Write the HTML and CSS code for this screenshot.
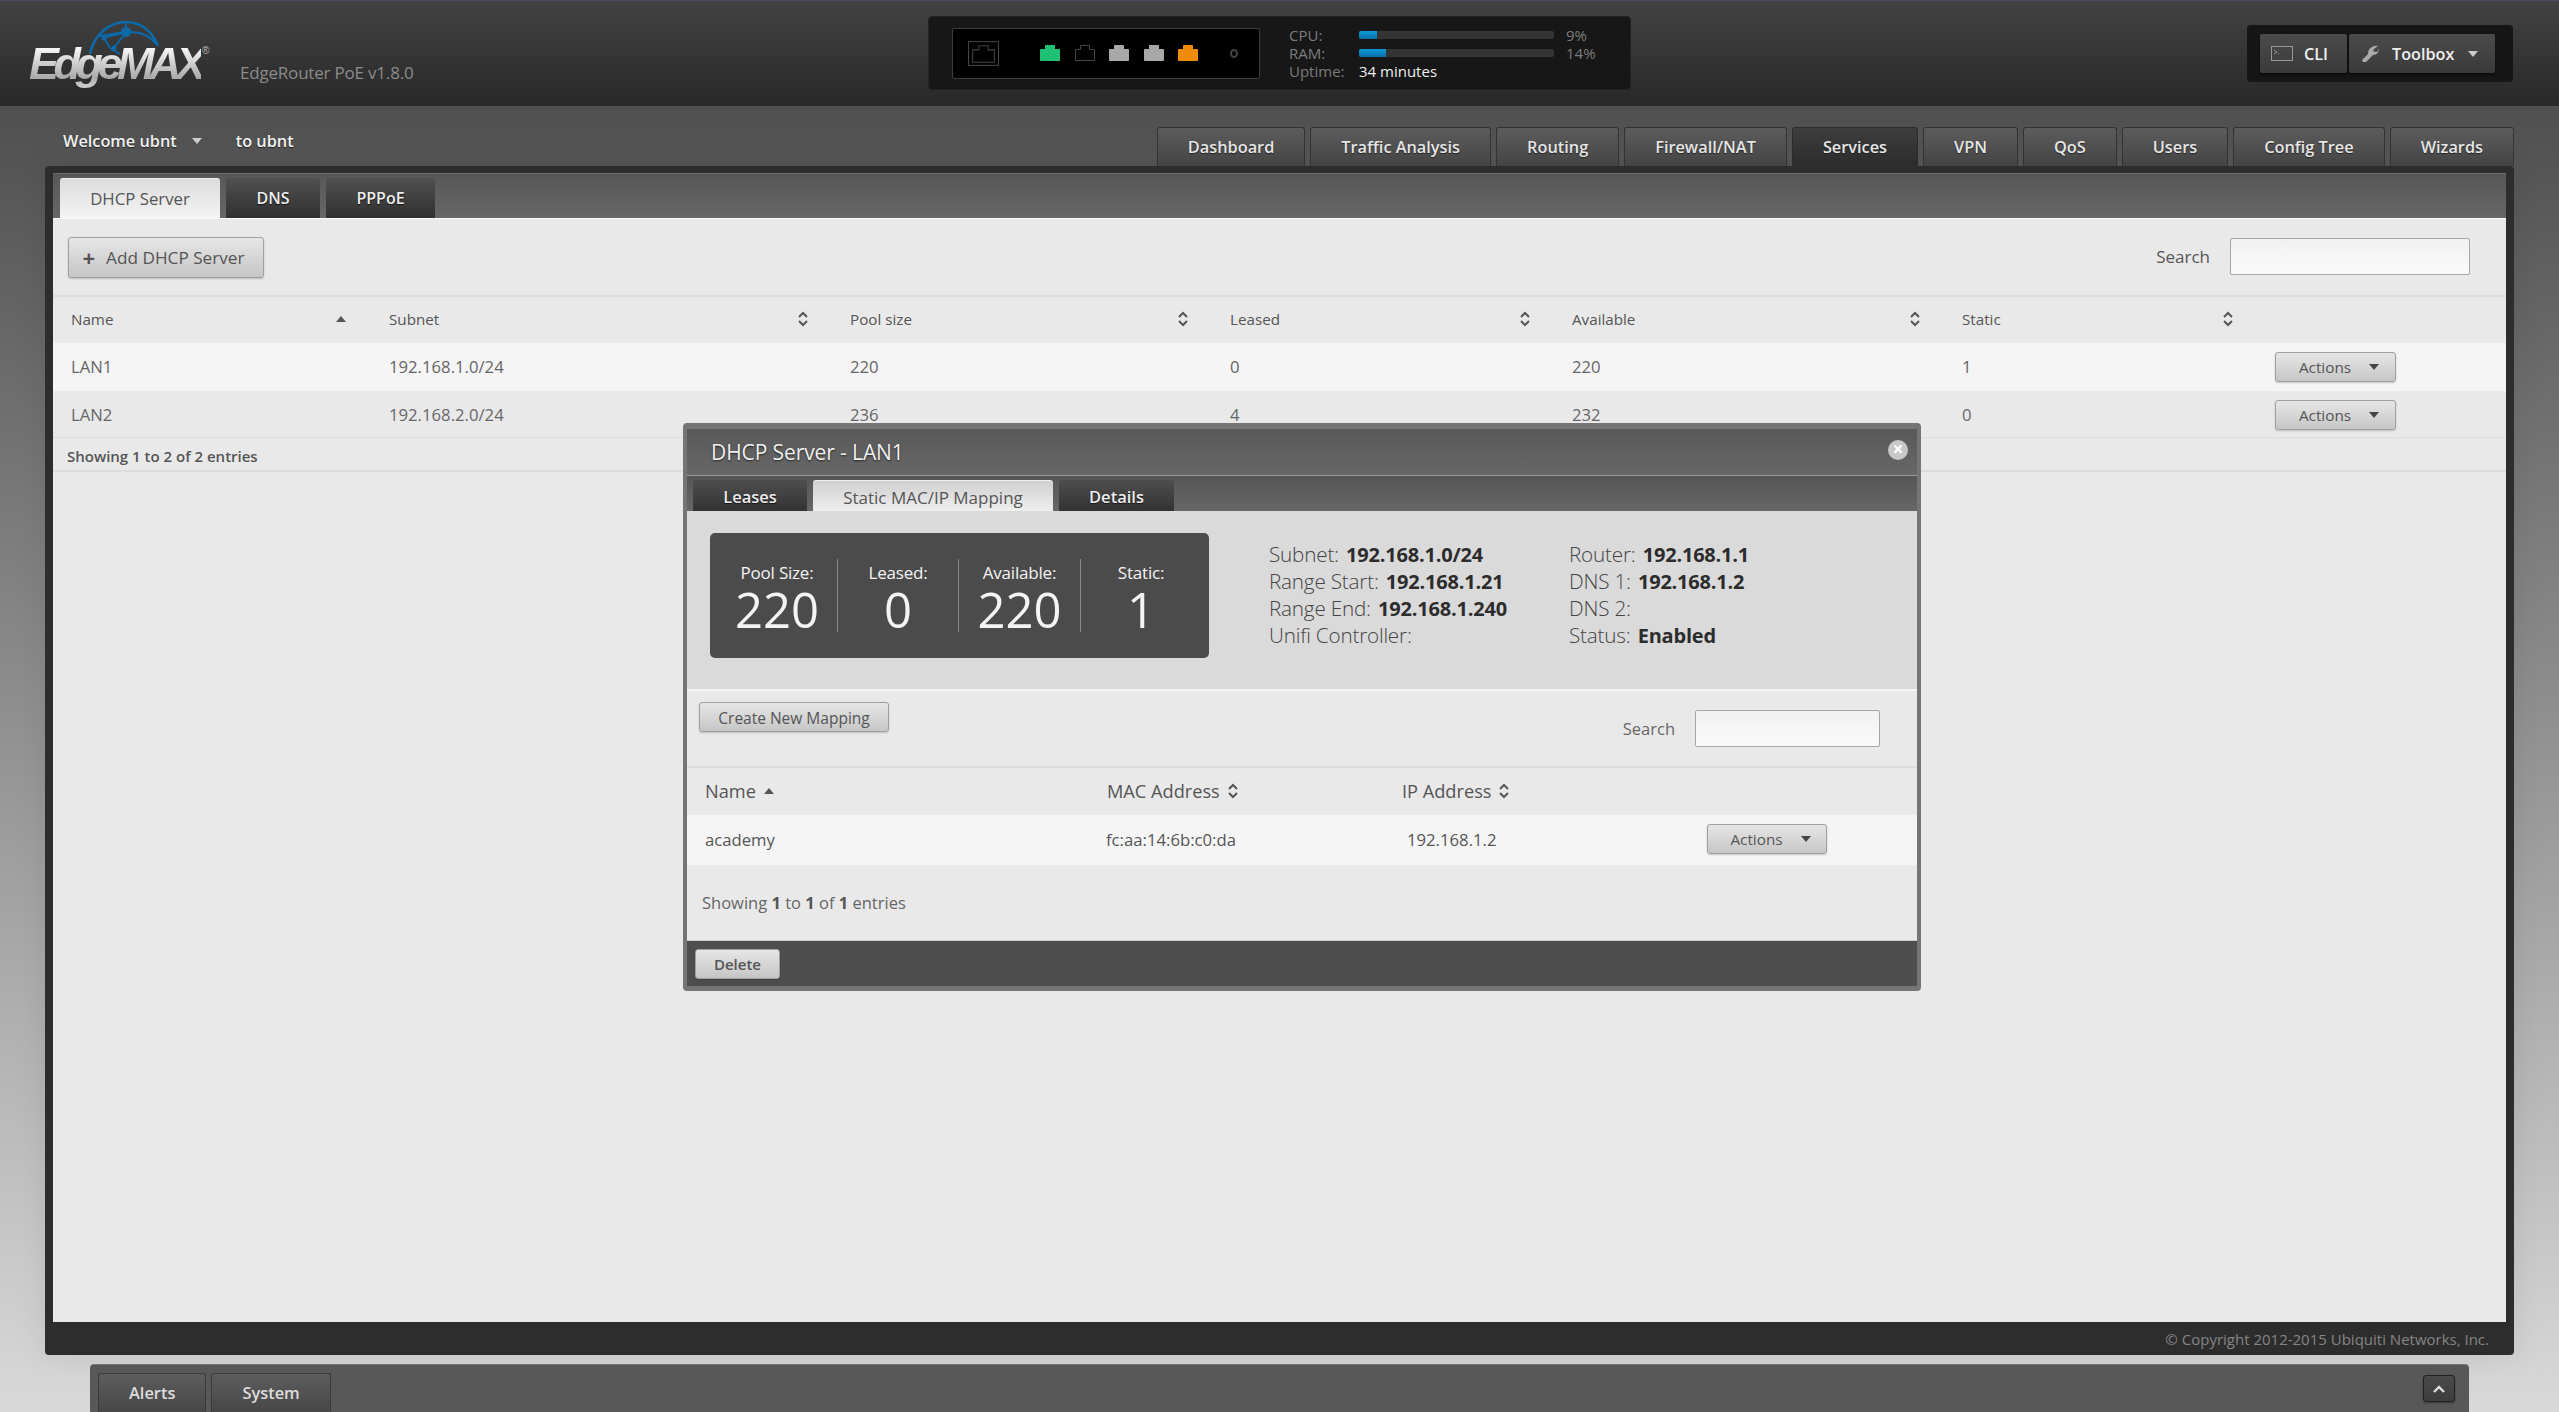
FILE: index.html
```html
<!DOCTYPE html>
<html lang="en">
<head>
<meta charset="utf-8">
<title>EdgeRouter PoE</title>
<link rel="stylesheet" href="styles.css">
</head>
<body>
<svg class="defs" width="0" height="0" aria-hidden="true">
  <symbol id="sort" viewBox="0 0 10 16"><path d="M1 6l4-4 4 4M1 10l4 4 4-4" fill="none" stroke="currentColor" stroke-width="2"/></symbol>
  <symbol id="port" viewBox="0 0 20 16"><path d="M.5 15.5V4.5h5v-4h9v4h5v11z"/></symbol>
</svg>
<header class="top">
  <div class="logo">
    <svg class="globe" viewBox="0 0 72 36" fill="none" stroke="#0b6bab">
      <path d="M2 34C6 14 22 2 38 2c14 0 26 8 32 24" stroke-width="2.6"/>
      <path d="M12 16c12-2 24-4 30-4 10 0 20 4 26 12M38 2c0 3 0 6 0 10L16 18l6 10 10 6M38 12L26 28" stroke-width="1.8"/>
      <circle cx="38" cy="12" r="5" fill="#0b6bab" stroke="none"/>
      <circle cx="16" cy="18" r="2.5" fill="#0b6bab" stroke="none"/>
      <circle cx="26" cy="28" r="2.5" fill="#0b6bab" stroke="none"/>
    </svg>
    <span class="logo-text">Edge<b>MAX</b></span><span class="logo-reg">®</span>
  </div>
  <div class="model">EdgeRouter PoE v1.8.0</div>
  <div class="status">
    <div class="ports">
      <svg class="port-main" viewBox="0 0 30 24" fill="none" stroke="#444"><rect x=".5" y=".5" width="29" height="23"/><path d="M4.500 20.500V8.500h6v-4h9v4h6v12z"/></svg>
      <svg class="port green"><use href="#port"/></svg>
      <svg class="port off"><use href="#port"/></svg>
      <svg class="port grey"><use href="#port"/></svg>
      <svg class="port grey"><use href="#port"/></svg>
      <svg class="port amber"><use href="#port"/></svg>
      <span class="led"></span>
    </div>
    <div class="meters">
      <span>CPU:</span><div class="bar"><i style="width:9%"></i></div><span>9%</span>
      <span>RAM:</span><div class="bar"><i style="width:14%"></i></div><span>14%</span>
      <span>Uptime:</span><strong>34 minutes</strong>
    </div>
  </div>
  <div class="tools">
    <button class="tool tool-cli"><svg class="ico-term" viewBox="0 0 22 15" fill="none" stroke="#999"><rect x=".5" y=".5" width="21" height="14"/><path d="M3 4l3 2-3 2M7 8h1"/></svg>CLI</button>
    <button class="tool tool-box"><svg class="ico-wrench" viewBox="0 0 18 18" fill="#aaa"><path d="M17 1l-4 3-1 2 3 1 2-1 1-3c0 4-2 7-6 7L5 17H2l-1-2 6-6c0-5 4-9 10-8z"/></svg>Toolbox<span class="caret caret-light"></span></button>
  </div>
</header>

<div class="subnav">
  <div class="welcome"><span>Welcome ubnt</span><span class="caret caret-light"></span><span class="to">to ubnt</span></div>
  <nav class="tabs">
    <a class="tab">Dashboard</a><a class="tab">Traffic Analysis</a><a class="tab">Routing</a><a class="tab">Firewall/NAT</a><a class="tab active">Services</a><a class="tab">VPN</a><a class="tab">QoS</a><a class="tab">Users</a><a class="tab">Config Tree</a><a class="tab">Wizards</a>
  </nav>
</div>

<main class="panel">
  <div class="panel-inner">
    <div class="strip">
      <a class="stab on">DHCP Server</a><a class="stab">DNS</a><a class="stab">PPPoE</a>
    </div>
    <div class="toolbar">
      <button class="btn btn-add"><span class="plus">+</span>Add DHCP Server</button>
      <label class="search"><span>Search</span><input class="input input-main" type="text"></label>
    </div>
    <div class="grid ghead">
      <div class="th">Name<svg class="tri" viewBox="0 0 10 6"><path d="M0 6l5-6 5 6z"/></svg></div>
      <div class="th">Subnet<svg class="sort"><use href="#sort"/></svg></div>
      <div class="th">Pool size<svg class="sort"><use href="#sort"/></svg></div>
      <div class="th">Leased<svg class="sort"><use href="#sort"/></svg></div>
      <div class="th">Available<svg class="sort"><use href="#sort"/></svg></div>
      <div class="th">Static<svg class="sort"><use href="#sort"/></svg></div>
      <div></div>
    </div>
    <div class="grid row row-a">
      <div>LAN1</div><div>192.168.1.0/24</div><div>220</div><div>0</div><div>220</div><div>1</div>
      <div class="cell-act"><button class="btn btn-act">Actions<span class="caret"></span></button></div>
    </div>
    <div class="grid row row-b">
      <div>LAN2</div><div>192.168.2.0/24</div><div>236</div><div>4</div><div>232</div><div>0</div>
      <div class="cell-act"><button class="btn btn-act">Actions<span class="caret"></span></button></div>
    </div>
    <div class="entries">Showing 1 to 2 of 2 entries</div>
  </div>
  <footer class="copy">© Copyright 2012-2015 Ubiquiti Networks, Inc.</footer>
</main>

<div class="dock">
  <a class="dtab">Alerts</a><a class="dtab">System</a>
  <button class="dbtn"><svg viewBox="0 0 12 8" fill="none" stroke="#ddd" stroke-width="2.400"><path d="M1 7l5-5 5 5"/></svg></button>
</div>

<section class="modal">
  <div class="m-title"><span>DHCP Server - LAN1</span><span class="m-close">×</span></div>
  <div class="m-tabs">
    <a class="mtab">Leases</a><a class="mtab on">Static MAC/IP Mapping</a><a class="mtab">Details</a>
  </div>
  <div class="m-info">
    <div class="stats">
      <div class="stat"><small>Pool Size:</small><b>220</b></div>
      <div class="stat"><small>Leased:</small><b>0</b></div>
      <div class="stat"><small>Available:</small><b>220</b></div>
      <div class="stat"><small>Static:</small><b>1</b></div>
    </div>
    <dl class="facts">
      <div>Subnet: <b>192.168.1.0/24</b></div>
      <div>Range Start: <b>192.168.1.21</b></div>
      <div>Range End: <b>192.168.1.240</b></div>
      <div>Unifi Controller:</div>
    </dl>
    <dl class="facts">
      <div>Router: <b>192.168.1.1</b></div>
      <div>DNS 1: <b>192.168.1.2</b></div>
      <div>DNS 2:</div>
      <div>Status: <b>Enabled</b></div>
    </dl>
  </div>
  <div class="m-toolbar">
    <button class="btn btn-create">Create New Mapping</button>
    <label class="search m-search"><span>Search</span><input class="input input-modal" type="text"></label>
  </div>
  <div class="mgrid mhead">
    <div>Name<svg class="tri tri-s" viewBox="0 0 10 6"><path d="M0 6l5-6 5 6z"/></svg></div>
    <div>MAC Address<svg class="sort sort-s"><use href="#sort"/></svg></div>
    <div>IP Address<svg class="sort sort-s"><use href="#sort"/></svg></div>
    <div></div>
  </div>
  <div class="mgrid mrow">
    <div>academy</div><div class="c-mac">fc:aa:14:6b:c0:da</div><div class="c-ip">192.168.1.2</div>
    <div class="cell-act"><button class="btn btn-act btn-mact">Actions<span class="caret"></span></button></div>
  </div>
  <div class="m-entries">Showing <b>1</b> to <b>1</b> of <b>1</b> entries</div>
  <div class="m-foot"><button class="btn btn-del">Delete</button></div>
</section>
</body>
</html>
```

FILE: styles.css
```css
* { box-sizing: border-box; }
html, body { margin: 0; height: 100%; }
body {
  position: relative;
  width: 2559px;
  height: 1412px;
  overflow: hidden;
  font-family: "Open Sans", "Liberation Sans", sans-serif;
  font-size: 16px;
  color: #555;
  background: linear-gradient(180deg, #4f4f4f 0, #4f4f4f 106px, #d9d9d9 100%);
}
.defs { position: absolute; }
button { font-family: inherit; cursor: pointer; }

/* top header */
.top {
  height: 106px;
  display: flex;
  align-items: flex-start;
  border-top: 1px solid #4e4a6a;
  background: linear-gradient(180deg, #434343, #282828);
}
.logo { position: relative; width: 240px; height: 105px; flex: none; }
.globe { position: absolute; left: 88px; top: 19px; width: 72px; height: 36px; }
.logo-text {
  position: absolute; left: 29px; top: 36px;
  font: italic 700 45px/54px "Liberation Sans", sans-serif;
  letter-spacing: -5.500px;
  white-space: nowrap;
  background: linear-gradient(180deg, #fff 15%, #aaa 75%, #ddd);
  -webkit-background-clip: text; background-clip: text;
  color: transparent;
}
.logo-reg { position: absolute; left: 202px; top: 44px; font: 10px/12px "Liberation Sans", sans-serif; color: #bbb; }
.model { width: 688px; flex: none; margin-top: 61px; font-size: 17px; line-height: 22px; color: #8b8b8b; letter-spacing: -.2px; }
.status {
  width: 703px; height: 74px; flex: none; margin-top: 15px;
  display: flex; align-items: center;
  padding-left: 23px;
  background: #171717; border: 1px solid #222; border-radius: 4px;
}
.ports {
  position: relative;
  width: 308px; height: 51px; flex: none;
  background: #000; border: 1px solid #3c3c3c; border-radius: 2px;
  display: flex; align-items: center; padding-left: 15px;
}
.port-main { width: 31px; height: 25px; margin-right: 41px; }
.port { width: 20px; height: 16px; margin-right: 14.500px; }
.green { fill: #1fc275; stroke: #1fc275; }
.off { fill: none; stroke: #444; }
.grey { fill: #a8a8a8; stroke: #a8a8a8; }
.amber { fill: #f08c0a; stroke: #f08c0a; }
.led { width: 8px; height: 9px; border: 2px solid #444; border-radius: 50%; margin-left: 17px; }
.meters {
  display: grid; grid-template-columns: 70px 195px auto;
  column-gap: 0; align-items: center;
  margin-left: 29px; font-size: 15px; line-height: 18px; color: #7c7c7c;
}
.meters span:nth-of-type(even) { padding-left: 12px; }
.meters strong { font-weight: 400; color: #eee; grid-column: 2 / 4; }
.bar { height: 8px; background: #343434; border-radius: 2px; overflow: hidden; }
.bar i { display: block; height: 100%; background: linear-gradient(180deg, #0f9bd8, #0a6fa8); }
.tools {
  width: 266px; height: 57px; flex: none; margin: 24px 0 0 616px;
  padding: 9px 0 0 13px; display: flex; gap: 2px;
  background: #161616; border-radius: 4px;
}
.tool {
  height: 39px; display: flex; align-items: center; padding: 0;
  border: 0; border-radius: 2px; color: #eee;
  font-size: 16.200px; font-weight: 600;
  background: linear-gradient(180deg, #4b4b4b, #3a3a3a);
  box-shadow: 0 2px 3px rgba(0,0,0,.5);
}
.tool-cli { width: 87px; padding-left: 11px; }
.tool-box { width: 146px; padding-left: 12px; }
.ico-term { width: 22px; height: 15px; margin-right: 11px; }
.ico-wrench { width: 18px; height: 18px; margin-right: 13px; }
.caret { display: inline-block; width: 0; height: 0; border: 5px solid transparent; border-top: 6px solid #444; border-bottom: 0; }
.caret-light { border-top-color: #ccc; }
.tool .caret { margin-left: 14px; }

/* sub navigation */
.subnav { height: 60px; display: flex; padding: 21px 45px 0 63px; justify-content: space-between; }
.welcome { color: #f2f2f2; font-weight: 600; font-size: 16.300px; line-height: 28px; display: flex; align-items: center; height: 28px; text-shadow: 0 1px 1px #222; }
.welcome .caret { margin: 0 0 0 15px; }
.to { margin-left: 34px; }
.tabs { display: flex; gap: 5px; }
.tab {
  height: 39px; padding: 0 30px; line-height: 38px;
  font-size: 16.320px; font-weight: 600; color: #e6e6e6;
  background: linear-gradient(180deg, #5c5c5c, #444);
  border: 1px solid #333; border-bottom: 0; border-radius: 3px 3px 0 0;
  text-shadow: 0 1px 1px #222;
  white-space: nowrap;
}
.tab.active { background: linear-gradient(180deg, #3d3d3d, #2c2c2c); border-color: #2c2c2c; }

/* main panel */
.panel {
  width: 2469px; height: 1189px; margin-left: 45px;
  padding: 7px 8px 0;
  background: #2d2d2d;
  border-radius: 4px;
  box-shadow: 0 0 30px rgba(0,0,0,.08);
}
.panel-inner { height: 1149px; background: #e9e9e9; }
.strip {
  height: 45px; padding: 4px 0 0 7px; display: flex; gap: 6px;
  background: linear-gradient(180deg, #575757, #676767);
  border-top: 1px solid #6d6d6d;
}
.stab {
  width: 94px; line-height: 41px; text-align: center; font-weight: 600; font-size: 16px;
  color: #eee; background: linear-gradient(180deg, #505050, #303030);
  border-radius: 3px 3px 0 0; text-shadow: 0 1px 1px #111;
}
.stab:nth-child(3) { width: 109px; }
.stab.on { width: 160px; font-weight: 400; font-size: 16.800px; line-height: 39px; color: #555; background: linear-gradient(180deg, #dcdcdc, #f4f4f4); text-shadow: none; border-top: 1px solid #eee; }
.toolbar {
  height: 79px; display: flex; justify-content: space-between; align-items: flex-start;
  padding: 18px 36px 0 15px;
  border-top: 1px solid #fafafa; border-bottom: 2px solid #dcdcdc;
}
.btn {
  display: inline-flex; align-items: center; justify-content: center;
  border: 1px solid #a0a0a0; border-radius: 3px; color: #555;
  background: linear-gradient(180deg, #e6e6e6, #c6c6c6);
  box-shadow: 0 1px 2px rgba(0,0,0,.2);
  padding: 0;
}
.btn-add { width: 196px; height: 41px; font-size: 17.200px; padding-bottom: 1px; }
.plus { font-size: 22px; font-weight: 700; line-height: 20px; margin-right: 11px; margin-left: -5px; }
.search { display: flex; align-items: center; gap: 20px; font-size: 17px; }
.toolbar .search { margin-top: 1px; }
.input { display: block; background: linear-gradient(180deg, #f1f1f1, #fbfbfb); border: 1px solid #a6a6a6; border-radius: 2px; }
.input-main { width: 240px; height: 37px; }
.grid {
  display: grid;
  grid-template-columns: 318px 461px 380px 342px 390px 313px 1fr;
  padding-left: 18px;
  align-items: center;
}
.ghead { height: 46px; font-size: 15.200px; padding-bottom: 2px; }
.th { display: flex; align-items: center; justify-content: space-between; padding-right: 42px; }
.th:first-child { padding-right: 43px; }
.sort { width: 10px; height: 16px; color: #555; flex: none; }
.tri { width: 10px; height: 6px; fill: #555; flex: none; }
.row { height: 48px; font-size: 16.700px; color: #666; }
.row-a { background: #f5f5f5; padding-bottom: 2px; }
.row-b { height: 47px; padding-top: 1px; border-bottom: 1px solid #dcdcdc; }
.row-a .cell-act { margin-bottom: -2px; }
.btn-act { width: 121px; height: 30px; font-size: 15.300px; gap: 18px; padding-left: 7px; }
.entries { height: 34px; padding-left: 14px; line-height: 36px; font-size: 15px; font-weight: 600; color: #555; border-bottom: 2px solid #dcdcdc; }
.copy { height: 33px; padding-right: 17px; text-align: right; line-height: 35px; font-size: 15px; color: #858585; }

/* dock */
.dock {
  width: 2379px; height: 60px; margin: 9px 0 0 90px;
  padding: 8px 0 0 8px; display: flex; gap: 5px; position: relative;
  background: #585858; border-radius: 4px 4px 0 0; border-top: 1px solid #777;
}
.dtab {
  height: 39px; padding: 0 30px; line-height: 38px; font-weight: 600; font-size: 16.400px; color: #ddd;
  background: linear-gradient(180deg, #5d5d5d, #474747);
  border: 1px solid #3a3a3a; border-bottom: 0; border-radius: 3px 3px 0 0;
}
.dbtn {
  position: absolute; right: 14px; top: 10px; width: 32px; height: 27px; padding: 0;
  background: linear-gradient(180deg, #4a4a4a, #3d3d3d);
  border: 1px solid #222; border-radius: 3px;
  display: flex; align-items: center; justify-content: center;
  box-shadow: 0 1px 2px rgba(0,0,0,.4);
}
.dbtn svg { width: 12px; height: 8px; }

/* modal */
.modal {
  position: absolute; left: 683px; top: 423px;
  width: 1238px; height: 568px;
  border: 4px solid #757575; border-top-width: 6px; border-bottom-width: 5px;
  border-radius: 4px;
  background: #e9e9e9;
}
.m-title {
  height: 47px; display: flex; justify-content: space-between; align-items: center;
  padding: 0 8px 0 24px; color: #f0f0f0; font-size: 21px; letter-spacing: -.1px;
  background: linear-gradient(180deg, #595959, #676767);
  border-bottom: 1px solid #999;
  text-shadow: 0 1px 2px #222;
}
.m-close {
  width: 20px; height: 20px; margin-bottom: 4px; margin-right: 1px; border-radius: 50%;
  background: #c8c8c8; color: #fff; font-weight: 700; font-size: 19px; line-height: 19px; text-align: center;
  text-shadow: none;
}
.m-tabs {
  height: 35px; padding: 4px 0 0 6px; display: flex; gap: 6px;
  background: linear-gradient(180deg, #555, #676767);
}
.mtab {
  width: 114px; line-height: 34px; text-align: center; font-size: 16.500px; font-weight: 600; color: #eee;
  background: linear-gradient(180deg, #4e4e4e, #333);
  border-radius: 3px 3px 0 0; text-shadow: 0 1px 1px #111;
}
.mtab.on { width: 240px; font-weight: 400; font-size: 17px; color: #555; background: linear-gradient(180deg, #d0d0d0, #efefef); border-top: 1px solid #eee; text-shadow: none; line-height: 33px; }
.mtab:last-child { width: 115px; }
.m-info { height: 180px; display: flex; align-items: flex-start; padding: 22px 0 0 23px; background: #dadada; border-bottom: 2px solid #f5f5f5; }
.stats {
  width: 499px; height: 125px; flex: none; display: grid;
  grid-template-columns: 128px 121px 122px 128px;
  align-items: center;
  background: #4b4b4b; border-radius: 5px; color: #f4f4f4;
}
.stat { height: 73px; text-align: center; border-right: 1px solid #8a8a8a; display: flex; flex-direction: column; }
.stat:first-child { padding-left: 7px; }
.stat:last-child { border-right: 0; padding-right: 8px; }
.stat small { font-size: 17px; line-height: 28px; letter-spacing: -.2px; }
.stat b { font-size: 49px; font-weight: 400; line-height: 44px; }
.facts { margin: 8px 0 0 60px; width: 300px; font-size: 20.700px; line-height: 27px; color: #444; font-weight: 300; letter-spacing: -.2px; }
.facts + .facts { margin-left: 0; }
.facts b { font-weight: 700; font-size: 20px; color: #2c2c2c; margin-left: 2px; }
.m-toolbar { height: 77px; display: flex; justify-content: space-between; align-items: flex-start; padding: 11px 37px 0 12px; border-bottom: 2px solid #dcdcdc; }
.btn-create { width: 190px; height: 30px; font-size: 15.500px; padding-top: 1px; }
.m-search { font-size: 16.500px; color: #666; gap: 20px; margin-top: 8px; }
.input-modal { width: 185px; height: 37px; }
.mgrid { display: grid; grid-template-columns: 402px 295px 303px 1fr; padding-left: 18px; align-items: center; }
.mhead { height: 47px; font-size: 18.200px; color: #555; padding-bottom: 2px; }
.mhead > div { display: flex; align-items: center; gap: 8px; }
.tri-s { margin-top: 1px; }
.mrow { height: 50px; background: #f5f5f5; font-size: 16.700px; color: #555; padding-bottom: 2px; }
.mrow .cell-act { margin-bottom: -1px; }
.c-mac { margin-left: -1px; }
.c-ip { margin-left: 5px; }
.btn-mact { width: 120px; margin-left: 2px; margin-top: -2px; }
.m-entries { height: 76px; padding: 26px 0 0 15px; font-size: 16.500px; line-height: 24px; color: #666; border-bottom: 1px solid #ccc; }
.m-entries b { font-weight: 700; color: #555; }
.m-foot { height: 45px; padding: 8px 0 0 8px; background: #4e4e4e; }
.btn-del { width: 85px; height: 30px; font-size: 15px; font-weight: 600; }
```
